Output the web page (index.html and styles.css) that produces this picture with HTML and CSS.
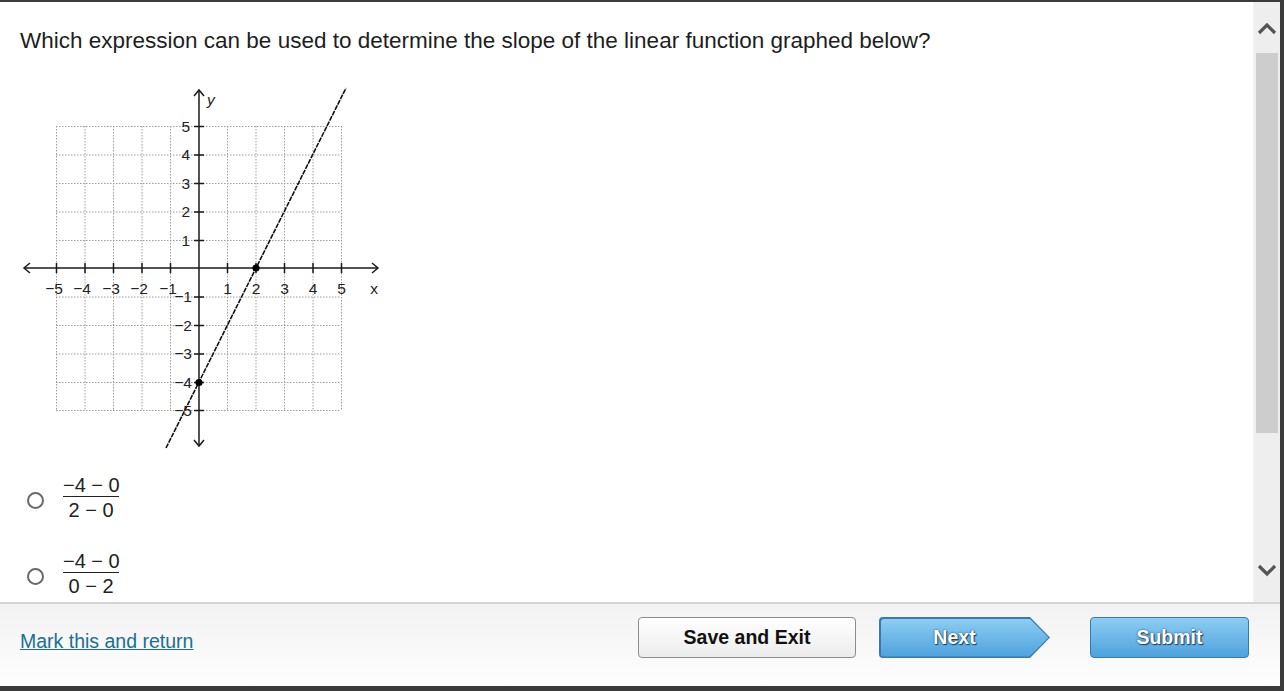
FILE: index.html
```html
<!DOCTYPE html>
<html>
<head>
<meta charset="utf-8">
<link rel="stylesheet" href="styles.css">
</head>
<body>
<div class="frame">
  <div class="main">
    <div class="content">
      <p class="question">Which expression can be used to determine the slope of the linear function graphed below?</p>
      <svg class="graph" width="380" height="380" viewBox="20 80 380 380" xmlns="http://www.w3.org/2000/svg">
        <g class="grid" stroke="#9c9c9c" stroke-width="1" stroke-dasharray="1.5 1.5" fill="none">
          <path d="M56.5 126V410M85 126V410M113.5 126V410M142 126V410M170.5 126V410M227.5 126V410M256 126V410M284.5 126V410M313 126V410M341.5 126V410"/>
          <path d="M56 126.5H341M56 155H341M56 183.5H341M56 212H341M56 240.5H341M56 297H341M56 325.5H341M56 354H341M56 382.5H341M56 410.5H341"/>
        </g>
        <g stroke="#1a1a1a" stroke-width="1.5" fill="none">
          <path d="M24 268H378"/>
          <path d="M30 263L24 268L30 273"/>
          <path d="M372 263L378 268L372 273"/>
          <path d="M199 90V446"/>
          <path d="M194 96L199 90L204 96"/>
          <path d="M194 440L199 446L204 440"/>
          <path d="M56.5 263V273M85 263V273M113.5 263V273M142 263V273M170.5 263V273M227.5 263V273M256 263V273M284.5 263V273M313 263V273M341.5 263V273"/>
          <path d="M194 126.5H204M194 155H204M194 183.5H204M194 212H204M194 240.5H204M194 297H204M194 325.5H204M194 354H204M194 382.5H204M194 410.5H204"/>
        </g>
        <path d="M166 448L346 88" stroke="#111" stroke-width="1.6" stroke-dasharray="5 1" fill="none"/>
        <circle cx="256" cy="268" r="3.6" fill="#000"/>
        <circle cx="199" cy="382.5" r="3.6" fill="#000"/>
        <g class="labels" font-family="Liberation Sans, Arial, sans-serif" font-size="15.5" fill="#222">
          <text x="54" y="294" text-anchor="middle">−5</text>
          <text x="82" y="294" text-anchor="middle">−4</text>
          <text x="111" y="294" text-anchor="middle">−3</text>
          <text x="139" y="294" text-anchor="middle">−2</text>
          <text x="168" y="294" text-anchor="middle">−1</text>
          <text x="227.5" y="294" text-anchor="middle">1</text>
          <text x="256" y="294" text-anchor="middle">2</text>
          <text x="284.5" y="294" text-anchor="middle">3</text>
          <text x="313" y="294" text-anchor="middle">4</text>
          <text x="341.5" y="294" text-anchor="middle">5</text>
          <text x="374" y="294" text-anchor="middle">x</text>
          <text x="190" y="131.5" text-anchor="end">5</text>
          <text x="190" y="160" text-anchor="end">4</text>
          <text x="190" y="188.5" text-anchor="end">3</text>
          <text x="190" y="217" text-anchor="end">2</text>
          <text x="190" y="245.5" text-anchor="end">1</text>
          <text x="192" y="302" text-anchor="end">−1</text>
          <text x="192" y="330.5" text-anchor="end">−2</text>
          <text x="192" y="359" text-anchor="end">−3</text>
          <text x="192" y="387.5" text-anchor="end">−4</text>
          <text x="192" y="415.5" text-anchor="end">−5</text>
          <text x="207" y="105" font-style="italic">y</text>
        </g>
      </svg>
      <div class="options">
        <label class="option">
          <span class="radio"></span>
          <span class="frac"><span class="num">−4 − 0</span><span class="den">2 − 0</span></span>
        </label>
        <label class="option">
          <span class="radio"></span>
          <span class="frac"><span class="num">−4 − 0</span><span class="den">0 − 2</span></span>
        </label>
      </div>
    </div>
    <div class="scrollbar">
      <div class="sb-up"><svg width="20" height="14" viewBox="0 0 20 14"><path d="M2 12L10 4L18 12" stroke="#555" stroke-width="3.2" fill="none"/></svg></div>
      <div class="sb-thumb"></div>
      <div class="sb-track"></div>
      <div class="sb-down"><svg width="20" height="14" viewBox="0 0 20 14"><path d="M2 3L10 11L18 3" stroke="#555" stroke-width="3.2" fill="none"/></svg></div>
    </div>
  </div>
  <div class="footer">
    <a class="mark" href="#">Mark this and return</a>
    <div class="buttons">
      <button class="btn btn-save">Save and Exit</button>
      <div class="next-outer"><div class="next-inner">Next</div></div>
      <button class="btn btn-blue">Submit</button>
    </div>
  </div>
</div>
</body>
</html>
```
FILE: styles.css
```css
html, body {
  margin: 0;
  padding: 0;
  background: #3b3b3b;
}
body {
  width: 1284px;
  height: 691px;
  overflow: hidden;
  font-family: "Liberation Sans", Arial, sans-serif;
}
.frame {
  width: 1280px;
  height: 684px;
  margin-top: 2px;
  background: #fff;
  display: flex;
  flex-direction: column;
}
.main {
  height: 600px;
  display: flex;
}
.content {
  flex: 1;
  padding-left: 20px;
  overflow: hidden;
}
.question {
  margin: 26px 0 0 0;
  font-size: 22.5px;
  line-height: 25px;
  color: #1e1e1e;
  white-space: nowrap;
}
.graph {
  display: block;
  margin-top: 27px;
}
.options {
  margin-top: 15px;
  display: flex;
  flex-direction: column;
  gap: 26px;
}
.option {
  display: flex;
  align-items: center;
  height: 50px;
}
.radio {
  width: 13px;
  height: 13px;
  border: 2px solid #6a6a6a;
  border-radius: 50%;
  margin-left: 7px;
  margin-right: 19px;
  box-sizing: content-box;
}
.frac {
  display: flex;
  flex-direction: column;
  align-items: center;
  font-family: "Liberation Sans", Arial, sans-serif;
  font-size: 20px;
  color: #222;
  width: 56px;
  white-space: nowrap;
  margin-bottom: 6px;
}
.num {
  line-height: 20px;
  width: 56px;
  text-align: center;
  border-bottom: 1.5px solid #222;
  padding-bottom: 1px;
}
.den {
  line-height: 20px;
  padding-top: 3px;
}
.scrollbar {
  width: 26px;
  background: #eeeeee;
  display: flex;
  flex-direction: column;
  align-items: center;
  border-left: 1px solid #f4f4f4;
}
.sb-up {
  height: 51px;
  display: flex;
  align-items: center;
  justify-content: center;
}
.sb-thumb {
  width: 22px;
  height: 380px;
  background: #cdcdcd;
}
.sb-track {
  flex: 1;
}
.sb-down {
  height: 64px;
  display: flex;
  align-items: center;
  justify-content: center;
}
.footer {
  flex: 1;
  border-top: 2px solid #d4d4d4;
  background: linear-gradient(#f2f2f2, #fefefe);
  display: flex;
  justify-content: space-between;
  align-items: flex-start;
  padding: 13px 31px 0 20px;
}
.mark {
  margin-top: 12px;
  font-size: 19.5px;
  line-height: 24px;
  color: #1b6f94;
  text-decoration: underline;
}
.buttons {
  display: flex;
  align-items: center;
}
.btn {
  height: 41px;
  font-family: "Liberation Sans", Arial, sans-serif;
  font-weight: bold;
  font-size: 19.5px;
  border-radius: 4px;
  padding: 0;
}
.btn-save {
  width: 218px;
  background: linear-gradient(#ffffff, #ececec);
  border: 1.5px solid #8c8c8c;
  color: #111;
  margin-right: 23px;
}
.btn-blue {
  width: 159px;
  background: linear-gradient(#8ccdf3, #4ea2dd);
  border: 1.5px solid #3a78ad;
  color: #fff;
  text-shadow: 0 0 2px #173f63, 1px 1px 1px #173f63;
}
.next-outer {
  width: 171px;
  height: 41px;
  background: #3a78ad;
  padding: 1.5px;
  box-sizing: border-box;
  clip-path: polygon(0 0, 151px 0, 100% 50%, 151px 100%, 0 100%);
  border-radius: 4px 0 0 4px;
  margin-right: 40px;
}
.next-inner {
  height: 100%;
  padding-right: 20px;
  background: linear-gradient(#8ccdf3, #4ea2dd);
  clip-path: polygon(0 0, 149px 0, 100% 50%, 149px 100%, 0 100%);
  border-radius: 3px 0 0 3px;
  color: #fff;
  font-weight: bold;
  font-size: 19.5px;
  display: flex;
  align-items: center;
  justify-content: center;
  text-shadow: 0 0 2px #173f63, 1px 1px 1px #173f63;
}
```
